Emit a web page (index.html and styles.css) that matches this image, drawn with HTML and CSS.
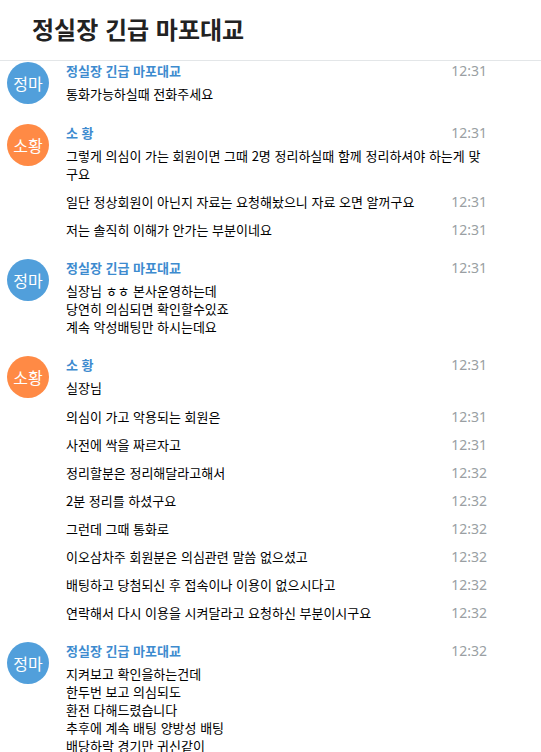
FILE: index.html
```html
<!DOCTYPE html>
<html lang="ko">
<head>
    <meta charset="UTF-8">
    <meta name="viewport" content="width=device-width, initial-scale=1.0">
    <title>정실장 긴급 마포대교</title>
    <link rel="stylesheet" href="styles.css">
</head>
<body>
    <div class="page_header">
        <div class="title">정실장 긴급 마포대교</div>
    </div>

    <div class="history">
        <div class="message">
            <div class="userpic blue">정마</div>
            <div class="body">
                <div class="date">12:31</div>
                <div class="from_name">정실장 긴급 마포대교</div>
                <div class="text">통화가능하실때 전화주세요</div>
            </div>
        </div>

        <div class="message">
            <div class="userpic orange">소황</div>
            <div class="body">
                <div class="date">12:31</div>
                <div class="from_name">소 황</div>
                <div class="text">그렇게 의심이 가는 회원이면 그때 2명 정리하실때 함께 정리하셔야 하는게 맞구요</div>
            </div>
        </div>
        <div class="message joined">
            <div class="body">
                <div class="date">12:31</div>
                <div class="text">일단 정상회원이 아닌지 자료는 요청해놨으니 자료 오면 알꺼구요</div>
            </div>
        </div>
        <div class="message joined">
            <div class="body">
                <div class="date">12:31</div>
                <div class="text">저는 솔직히 이해가 안가는 부분이네요</div>
            </div>
        </div>

        <div class="message">
            <div class="userpic blue">정마</div>
            <div class="body">
                <div class="date">12:31</div>
                <div class="from_name">정실장 긴급 마포대교</div>
                <div class="text">실장님 ㅎㅎ 본사운영하는데<br>당연히 의심되면 확인할수있죠<br>계속 악성배팅만 하시는데요</div>
            </div>
        </div>

        <div class="message">
            <div class="userpic orange">소황</div>
            <div class="body">
                <div class="date">12:31</div>
                <div class="from_name">소 황</div>
                <div class="text">실장님</div>
            </div>
        </div>
        <div class="message joined">
            <div class="body">
                <div class="date">12:31</div>
                <div class="text">의심이 가고 악용되는 회원은</div>
            </div>
        </div>
        <div class="message joined">
            <div class="body">
                <div class="date">12:31</div>
                <div class="text">사전에 싹을 짜르자고</div>
            </div>
        </div>
        <div class="message joined">
            <div class="body">
                <div class="date">12:32</div>
                <div class="text">정리할분은 정리해달라고해서</div>
            </div>
        </div>
        <div class="message joined">
            <div class="body">
                <div class="date">12:32</div>
                <div class="text">2분 정리를 하셨구요</div>
            </div>
        </div>
        <div class="message joined">
            <div class="body">
                <div class="date">12:32</div>
                <div class="text">그런데 그때 통화로</div>
            </div>
        </div>
        <div class="message joined">
            <div class="body">
                <div class="date">12:32</div>
                <div class="text">이오삼차주 회원분은 의심관련 말씀 없으셨고</div>
            </div>
        </div>
        <div class="message joined">
            <div class="body">
                <div class="date">12:32</div>
                <div class="text">배팅하고 당첨되신 후 접속이나 이용이 없으시다고</div>
            </div>
        </div>
        <div class="message joined">
            <div class="body">
                <div class="date">12:32</div>
                <div class="text">연락해서 다시 이용을 시켜달라고 요청하신 부분이시구요</div>
            </div>
        </div>

        <div class="message">
            <div class="userpic blue">정마</div>
            <div class="body">
                <div class="date">12:32</div>
                <div class="from_name">정실장 긴급 마포대교</div>
                <div class="text">지켜보고 확인을하는건데<br>한두번 보고 의심되도<br>환전 다해드렸습니다<br>추후에 계속 배팅 양방성 배팅<br>배당하락 경기만 귀신같이</div>
            </div>
        </div>
    </div>
</body>
</html>
```

FILE: styles.css
```css
body {
    font-family: "Noto Sans CJK KR", "Noto Sans", sans-serif;
    font-size: 13px;
    color: #000;
    background-color: #fff;
    margin: 0;
}

.page_header {
    height: 60px;
    border-bottom: 1px solid #e3e6e8;
    display: flex;
    align-items: center;
    padding-left: 32px;
}

.title {
    font-size: 24px;
    font-weight: 700;
    color: #222;
    line-height: 26px;
    padding-bottom: 2px;
}

.history {
    padding: 0 54px 0 7px;
}

.message {
    display: flex;
    padding: 10px 0;
    line-height: 18px;
}

.message:first-child {
    padding-top: 1px;
}

.message.joined {
    padding-top: 0;
}

.userpic {
    width: 42px;
    height: 42px;
    border-radius: 50%;
    flex-shrink: 0;
    color: #fff;
    font-size: 16px;
    line-height: 42px;
    text-align: center;
}

.blue {
    background-color: #519fdb;
}

.orange {
    background-color: #ff8a45;
}

.body {
    flex: 1;
    margin-left: 17px;
}

.joined .body {
    margin-left: 59px;
}

.date {
    float: right;
    color: #9a9fa3;
    font-family: "Noto Sans", sans-serif;
    font-size: 14px;
}

.from_name {
    color: #3d8bcf;
    font-weight: 700;
    padding-bottom: 5px;
}
```
